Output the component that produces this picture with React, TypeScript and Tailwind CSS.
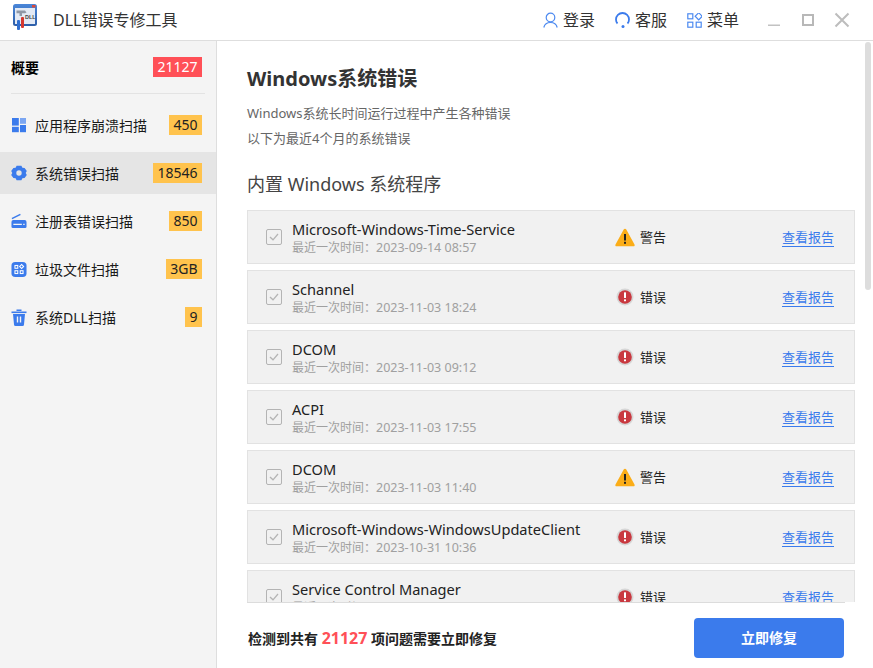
import React from "react";

const font = { fontFamily: '"Noto Sans","Noto Sans CJK SC",sans-serif' };

const rows = [
  { name: "Microsoft-Windows-Time-Service", time: "2023-09-14 08:57", warn: true },
  { name: "Schannel", time: "2023-11-03 18:24", warn: false },
  { name: "DCOM", time: "2023-11-03 09:12", warn: false },
  { name: "ACPI", time: "2023-11-03 17:55", warn: false },
  { name: "DCOM", time: "2023-11-03 11:40", warn: true },
  { name: "Microsoft-Windows-WindowsUpdateClient", time: "2023-10-31 10:36", warn: false },
  { name: "Service Control Manager", time: "2023-11-02 10:36", warn: false },
];

function Logo() {
  return (
    <svg width="26" height="32" viewBox="0 0 26 32">
      <defs>
        <linearGradient id="lg" x1="0" y1="0" x2="0" y2="1">
          <stop offset="0" stopColor="#4a86d8" />
          <stop offset="1" stopColor="#2d5ea8" />
        </linearGradient>
      </defs>
      <rect x="1" y="0" width="24" height="22" rx="2.500" fill="url(#lg)" />
      <rect x="3" y="4" width="20" height="16" fill="#e3eaf5" />
      <rect x="20" y="1" width="3.500" height="2.500" fill="#d9483b" />
      <text x="13" y="15" fontSize="5.500" fontWeight="700" fill="#444" fontFamily="Liberation Sans">DLL</text>
      <path d="M4.500 6.500h8.500l1.500 2-1.500.8H10V12H7.500V9.300H4.500z" fill="#8f98a6" />
      <rect x="5" y="16" width="3" height="10" rx="1" fill="#2f6fd0" />
      <rect x="9" y="13" width="3" height="11" rx="1" fill="#d5382f" />
    </svg>
  );
}

function AppsIcon() {
  return (
    <svg width="16" height="16" viewBox="0 0 16 16" fill="#3b7bec">
      <rect x="1" y="1" width="6.8" height="7.6" />
      <rect x="9" y="1" width="6" height="5.8" fill="#7ba6f2" />
      <rect x="1" y="9.8" width="6.8" height="5.4" />
      <rect x="9" y="8" width="6" height="7.2" />
    </svg>
  );
}
function GearIcon() {
  return (
    <svg width="16" height="16" viewBox="0 0 16 16">
      <path fillRule="evenodd" fill="#3b7bec" d="M5.600.8h4.800l1 1.900 2.200.2 2.200 3.200-1.100 1.900 1.100 1.900-2.200 3.200-2.200.2-1 1.900H5.600l-1-1.900-2.200-.2L.2 9.900l1.100-1.900L.2 6.100l2.200-3.200 2.200-.2zM8 5.300a2.700 2.700 0 1 0 0 5.400 2.700 2.700 0 0 0 0-5.400z" />
    </svg>
  );
}
function ScanIcon() {
  return (
    <svg width="17" height="16" viewBox="0 0 17 16">
      <path d="M1 5.500 10 1" stroke="#3b7bec" strokeWidth="1.600" fill="none" />
      <path fillRule="evenodd" fill="#3b7bec" d="M2.500 7h12A2 2 0 0 1 16.500 9v5a1.500 1.500 0 0 1-1.500 1.500H2A1.500 1.500 0 0 1 .5 14V9a2 2 0 0 1 2-2zM2.500 11v1.300h9V11zM13 11v1.300h1.500V11z" />
    </svg>
  );
}
function GridBoxIcon() {
  return (
    <svg width="17" height="17" viewBox="0 0 17 17">
      <rect x=".5" y=".5" width="16" height="16" rx="4" fill="#3b7bec" />
      <g fill="none" stroke="#fff" strokeWidth="1.100">
        <rect x="4.200" y="4.200" width="3" height="3" />
        <rect x="9.800" y="3.800" width="3" height="3" transform="rotate(45 11.300 5.300)" />
        <rect x="4.200" y="9.800" width="3" height="3" />
        <rect x="9.800" y="9.800" width="3" height="3" />
      </g>
    </svg>
  );
}
function TrashIcon() {
  return (
    <svg width="16" height="17" viewBox="0 0 16 17">
      <rect x="5.500" y=".5" width="5" height="1.500" fill="#3b7bec" />
      <rect x=".5" y="2.500" width="15" height="1.600" fill="#3b7bec" />
      <path fillRule="evenodd" fill="#3b7bec" d="M2 5h12l-1 10.500a1.500 1.500 0 0 1-1.500 1.500h-7A1.500 1.500 0 0 1 3 15.500zM5.800 7.500v6h1.400v-6zM8.800 7.500v6h1.400v-6z" />
    </svg>
  );
}

function WarnIcon() {
  return (
    <svg width="20" height="19" viewBox="0 0 20 19">
      <path d="M10 .8c.6 0 1 .3 1.300.8l8.200 14.800c.5.900 0 1.800-1 1.800H1.500c-1 0-1.500-.9-1-1.800L8.700 1.600c.3-.5.700-.8 1.300-.8z" fill="#fbad18" />
      <rect x="9" y="6" width="2" height="6.500" fill="#222" />
      <rect x="9" y="13.800" width="2" height="2" fill="#222" />
    </svg>
  );
}
function ErrorIcon() {
  return (
    <svg width="18" height="18" viewBox="0 0 18 18">
      <circle cx="9" cy="9" r="8.500" fill="#d6d6d6" />
      <circle cx="9" cy="9" r="6.800" fill="#c9383f" />
      <rect x="8" y="4.300" width="2" height="5.700" rx=".5" fill="#fff" />
      <rect x="8" y="11.200" width="2" height="2" rx=".5" fill="#fff" />
    </svg>
  );
}

function NavItem({ icon, label, count, active }: { icon: React.ReactNode; label: string; count: string; active?: boolean }) {
  return (
    <div className={`flex h-[42px] items-center pl-[11px] pr-[14px] ${active ? "bg-[#e5e5e5]" : ""}`}>
      <span className="flex w-[16px] justify-center">{icon}</span>
      <span className="ml-2 flex-1 pt-[2px] text-sm text-[#1a1a1a]">{label}</span>
      <span className="flex h-5 items-center bg-[#ffc34d] px-[4.500px] text-sm text-[#222]">{count}</span>
    </div>
  );
}

function Row({ name, time, warn }: { name: string; time: string; warn: boolean }) {
  return (
    <div className="flex h-[54px] shrink-0 items-center border border-[#e2e2e2] bg-[#f1f1f1] pl-[18px]">
      <span className="flex h-4 w-4 items-center justify-center rounded-[2px] border border-[#b4b4b4] bg-[#f1f1f1]">
        <svg width="10" height="8" viewBox="0 0 10 8" fill="none" stroke="#b4b4b4" strokeWidth="1.300"><path d="M1 4l3 2.800L9 1" /></svg>
      </span>
      <div className="ml-[10px] flex w-[322px] flex-col">
        <span className="text-[14.600px] leading-[20px] text-[#222]">{name}</span>
        <span className="pt-px text-xs leading-4 text-[#a0a0a0]">最近一次时间：<span className="text-[12.500px]">{time}</span></span>
      </div>
      <span className="flex w-[22px] justify-center">{warn ? <WarnIcon /> : <ErrorIcon />}</span>
      <span className="ml-[4px] w-[142px] pt-px text-[13px] text-[#222]">{warn ? "警告" : "错误"}</span>
      <a className="mt-[2px] border-b border-[#3b7bec] text-[13px] leading-[17px] text-[#3b7bec]">查看报告</a>
    </div>
  );
}

export default function App() {
  return (
    <div className="flex h-[668px] w-[873px] flex-col overflow-hidden bg-white" style={font}>
      <header className="flex h-[41px] shrink-0 items-center border-b border-[#dedede] pl-[12px] pr-[23px]">
        <Logo />
        <span className="ml-[15px] flex-1 text-base text-[#333]">DLL错误专修工具</span>
        <div className="flex items-center gap-[5px] text-base text-[#333]">
          <svg width="15" height="17" viewBox="0 0 15 17" fill="none" stroke="#4d8af0" strokeWidth="1.200"><circle cx="7.500" cy="5.500" r="4.300" /><path d="M.8 15.500c.8-3.300 3.300-5 6.700-5s5.900 1.700 6.700 5" /></svg>
          <span>登录</span>
        </div>
        <div className="ml-[20px] flex items-center gap-[5px] text-base text-[#333]">
          <svg width="15" height="17" viewBox="0 0 15 17" fill="none" stroke="#3b7bec" strokeWidth="1.800"><path d="M2.500 11.500C1.500 10.500 1 9 1 7.500a6.500 6.500 0 0 1 13 0c0 1.500-.5 3-1.500 4" /><circle cx="8" cy="14.500" r="1.500" fill="#3b7bec" stroke="none" /></svg>
          <span>客服</span>
        </div>
        <div className="ml-[20px] flex items-center gap-[5px] text-base text-[#333]">
          <svg width="15" height="15" viewBox="0 0 15 15" fill="none" stroke="#4d8af0" strokeWidth="1.200"><rect x=".8" y=".8" width="5" height="5" /><rect x="9.200" y=".8" width="5" height="5" transform="rotate(45 11.700 3.300)" /><rect x=".8" y="9.200" width="5" height="5" /><rect x="9.200" y="9.200" width="5" height="5" /></svg>
          <span>菜单</span>
        </div>
        <svg className="ml-[28px]" width="14" height="14" viewBox="0 0 14 14"><rect x="1" y="11.500" width="12" height="1.500" fill="#c2c2c2" /></svg>
        <svg className="ml-[20px]" width="14" height="14" viewBox="0 0 14 14" fill="none" stroke="#b8b8b8" strokeWidth="2"><rect x="2" y="2" width="10" height="10" /></svg>
        <svg className="ml-[19px]" width="16" height="16" viewBox="0 0 16 16" fill="none" stroke="#bdbdbd" strokeWidth="2"><path d="M1.500 1.500l13 13M14.500 1.500l-13 13" /></svg>
      </header>

      <div className="flex min-h-0 flex-1">
        <aside className="w-[217px] shrink-0 border-r border-[#dedede] bg-[#f4f4f4]">
          <div className="mx-[11px] flex h-[53px] items-center justify-between border-b border-[#e3e3e3] pr-[3px]">
            <span className="pt-[2px] text-sm font-bold text-black">概要</span>
            <span className="flex h-5 items-center bg-[#ff5057] px-[4.500px] text-sm text-white">21127</span>
          </div>
          <div className="mt-[10px] flex flex-col gap-[6px]">
            <NavItem icon={<AppsIcon />} label="应用程序崩溃扫描" count="450" />
            <NavItem icon={<GearIcon />} label="系统错误扫描" count="18546" active />
            <NavItem icon={<ScanIcon />} label="注册表错误扫描" count="850" />
            <NavItem icon={<GridBoxIcon />} label="垃圾文件扫描" count="3GB" />
            <NavItem icon={<TrashIcon />} label="系统DLL扫描" count="9" />
          </div>
        </aside>

        <main className="relative flex min-w-0 flex-1 flex-col">
          <div className="min-h-0 flex-1 overflow-hidden pl-[30px] pr-[18px]">
            <h1 className="mt-[22px] text-xl font-bold leading-[32px] text-[#333]">Windows系统错误</h1>
            <p className="mt-[6px] text-[13px] leading-[25px] text-[#666]">Windows系统长时间运行过程中产生各种错误<br />以下为最近4个月的系统错误</p>
            <h2 className="mt-[20px] text-lg leading-[26px] text-[#444]">内置 Windows 系统程序</h2>
            <div className="mt-[13px] flex flex-col gap-[6px]">
              {rows.map((r, i) => <Row key={i} {...r} />)}
            </div>
          </div>
          <footer className="ml-[30px] mr-[28px] flex h-[66px] shrink-0 items-center justify-between border-t border-[#dcdcdc] pl-px pr-px pt-[5px]">
            <span className="text-sm font-bold text-[#222]">检测到共有 <span className="text-base text-[#ff5057]">21127</span> 项问题需要立即修复</span>
            <button className="flex h-10 w-[150px] items-center justify-center rounded-[4px] bg-[#3b7bec] text-sm font-bold text-white">立即修复</button>
          </footer>
          <div className="absolute right-[2px] top-[1px] h-[248px] w-[6px] rounded-[3px] bg-[#dddddd]" />
        </main>
      </div>
    </div>
  );
}
